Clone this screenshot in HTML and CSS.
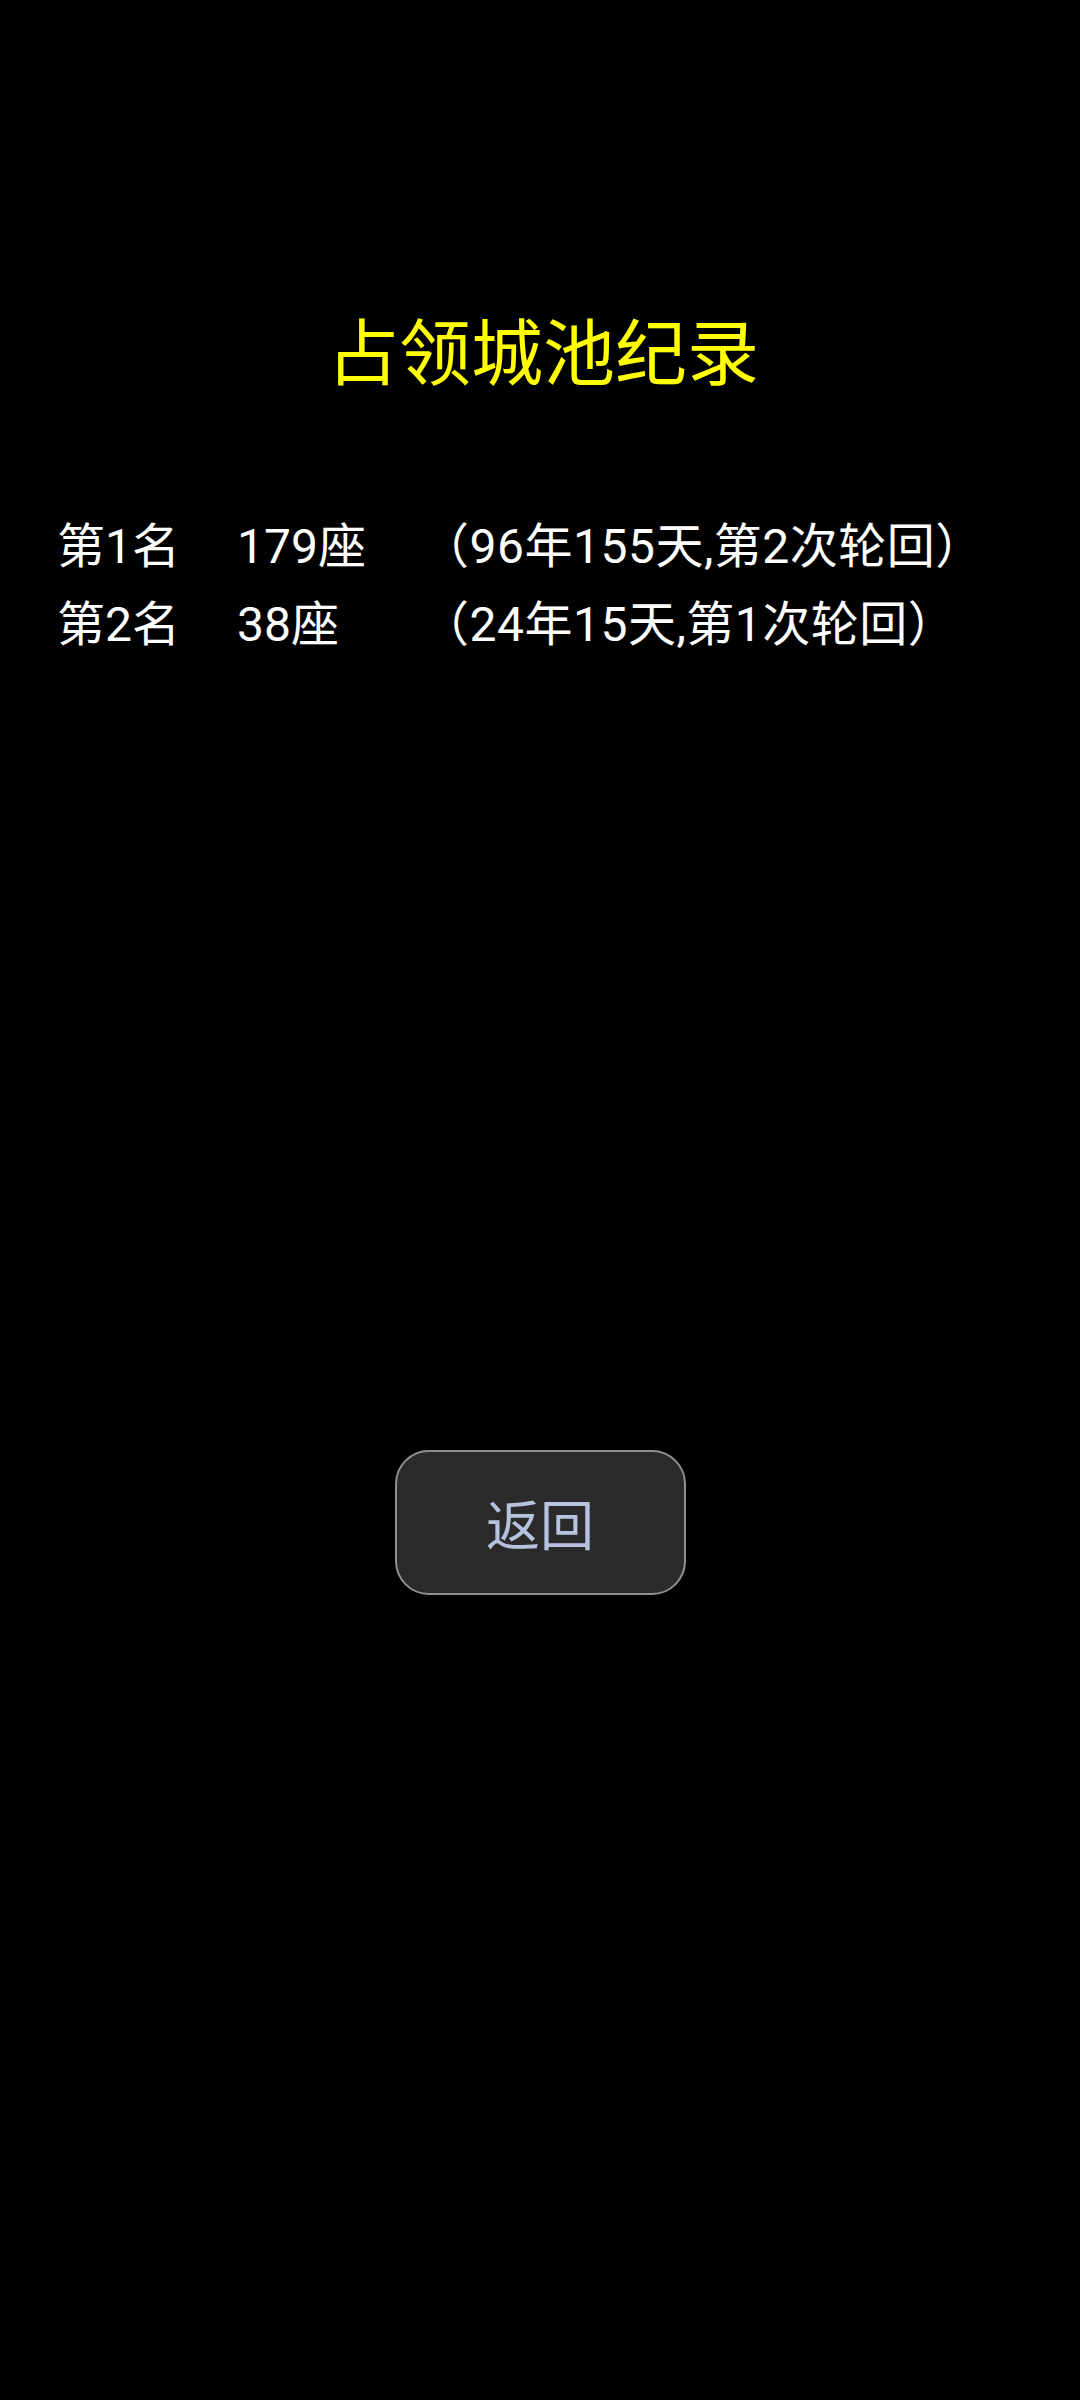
FILE: index.html
```html
<!DOCTYPE html>
<html lang="zh-CN">
<head>
<meta charset="utf-8">
<title>占领城池纪录</title>
<link rel="stylesheet" href="styles.css">
</head>
<body>
<div class="screen">
  <h1 class="title">占领城池纪录</h1>
  <div class="records">
    <div class="row">
      <span class="rank">第1名</span>
      <span class="count">179座</span>
      <span class="detail">（96年155天,第2次轮回）</span>
    </div>
    <div class="row">
      <span class="rank">第2名</span>
      <span class="count">38座</span>
      <span class="detail">（24年15天,第1次轮回）</span>
    </div>
  </div>
  <div class="actions">
    <button class="back">返回</button>
  </div>
</div>
</body>
</html>
```

FILE: styles.css
```css
html, body {
  margin: 0;
  padding: 0;
  background: #000;
}
body {
  width: 1080px;
  height: 2400px;
  font-family: Roboto, "Noto Sans CJK SC", sans-serif;
  color: #fff;
  text-spacing-trim: space-all;
}
.screen {
  display: flex;
  flex-direction: column;
  padding-top: 312px;
}
.title {
  margin: 0;
  font-weight: normal;
  font-size: 72px;
  line-height: 86px;
  color: #ffff00;
  text-align: center;
  padding-left: 6px;
}
.records {
  margin-top: 110px;
  display: flex;
  flex-direction: column;
}
.row {
  display: grid;
  grid-template-columns: 180px 184px auto;
  padding-left: 57px;
  font-size: 48px;
  line-height: 78px;
  white-space: nowrap;
}
.detail {
  text-spacing-trim: space-all;
  letter-spacing: 0.5px;
}
.actions {
  margin-top: 786px;
  display: flex;
  justify-content: center;
}
.back {
  width: 291px;
  height: 145px;
  box-sizing: border-box;
  border: 2px solid #8e8e93;
  border-radius: 34px;
  background: #2a2a2a;
  color: #b6c2de;
  font-family: Roboto, "Noto Sans CJK SC", sans-serif;
  font-size: 54px;
  padding: 0;
}
```
